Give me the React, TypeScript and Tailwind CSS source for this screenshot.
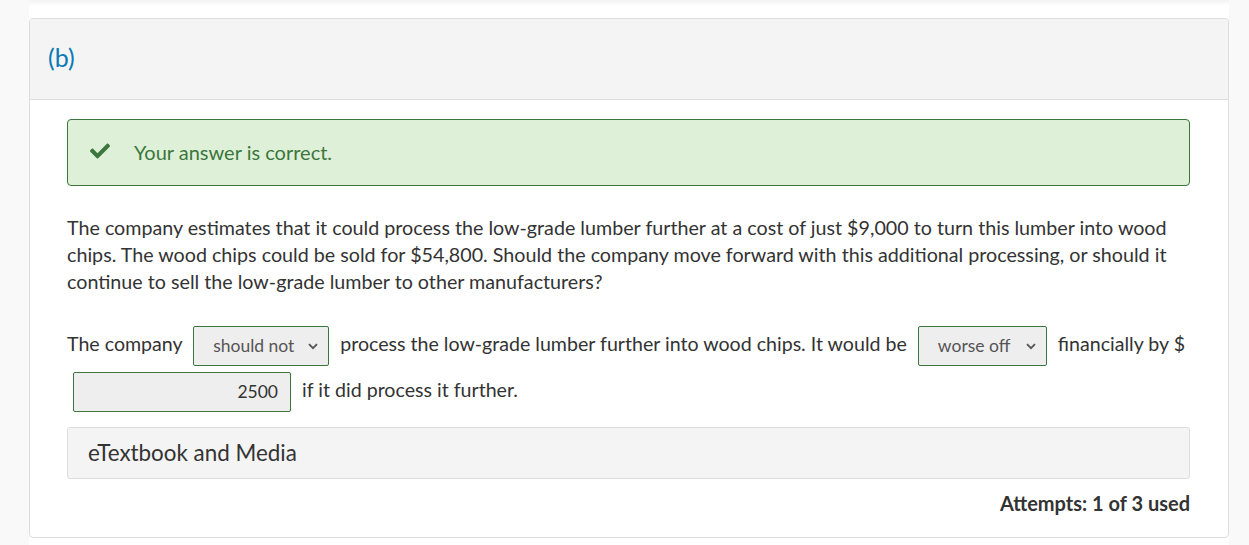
import React from "react";
import { FaCheck } from "react-icons/fa";

function Chevron() {
  return (
    <svg width="10" height="7" viewBox="0 0 10 7" className="shrink-0">
      <path d="M1 1.2 L5 5.2 L9 1.2" fill="none" stroke="#555" strokeWidth="1.8" />
    </svg>
  );
}

function Select({ value, width }: { value: string; width: string }) {
  return (
    <span
      className={`inline-flex items-center justify-between align-middle h-[40px] mx-[6px] pl-[19px] pr-[10px] bg-[#eeeeee] border border-[#3c763d] rounded-[2px] text-[17.5px] text-[#555] ${width}`}
    >
      <span>{value}</span>
      <Chevron />
    </span>
  );
}

export default function App() {
  return (
    <div
      className="min-h-[545px] bg-[#f9f9f9] text-[#333333]"
      style={{ fontFamily: "Lato, 'Open Sans', sans-serif" }}
    >
      <div className="ml-[29px] w-[1200px] min-h-[545px] bg-white bg-gradient-to-b from-[#f3f3f3] to-white bg-[length:100%_6px] bg-no-repeat pt-[18px]">
        <div className="border border-[#dddddd] rounded-[4px] bg-white">
          <div className="h-[81px] bg-[#f4f4f4] border-b border-[#dddddd] rounded-t-[4px] pl-[18px] flex items-center">
            <span className="text-[25px] text-[#0a7ab5] -mt-[2px]">(b)</span>
          </div>
          <div className="pl-[37px] pr-[38px] pt-[19px] pb-[20px]">
            <div className="h-[67px] bg-[#dff0d8] border border-[#3c763d] rounded-[4px] flex items-center pl-[20px]">
              <FaCheck className="text-[#3c763d] w-[24px] h-[20px] -mt-[3px]" />
              <span className="ml-[22px] text-[20px] text-[#3c763d] -mt-[1px]">Your answer is correct.</span>
            </div>
            <p className="mt-[28px] text-[19.7px] leading-[27px]">
              The company estimates that it could process the low-grade lumber further at a cost of just $9,000 to turn this lumber into wood chips. The wood chips could be sold for $54,800. Should the company move forward with this additional processing, or should it continue to sell the low-grade lumber to other manufacturers?
            </p>
            <div className="mt-[26px] text-[19.6px] leading-[46px]">
              The company <Select value="should not" width="w-[136px]" /> process the low-grade lumber further into wood chips. It would be{" "}
              <Select value="worse off" width="w-[129px]" /> financially by $
              <br />
              <span className="inline-flex items-center justify-end align-middle h-[40px] w-[218px] ml-[6px] mr-[6px] pr-[12px] bg-[#eeeeee] border border-[#3c763d] rounded-[2px] text-[17.5px] text-[#333]">
                2500
              </span>{" "}
              if it did process it further.
            </div>
            <div className="mt-[14px] h-[52px] bg-[#f4f4f4] border border-[#dddddd] rounded-[3px] flex items-center pl-[20px]">
              <span className="text-[22.4px]">eTextbook and Media</span>
            </div>
            <div className="mt-[11px] text-right text-[20px] font-bold leading-[27px]">Attempts: 1 of 3 used</div>
          </div>
        </div>
      </div>
    </div>
  );
}
